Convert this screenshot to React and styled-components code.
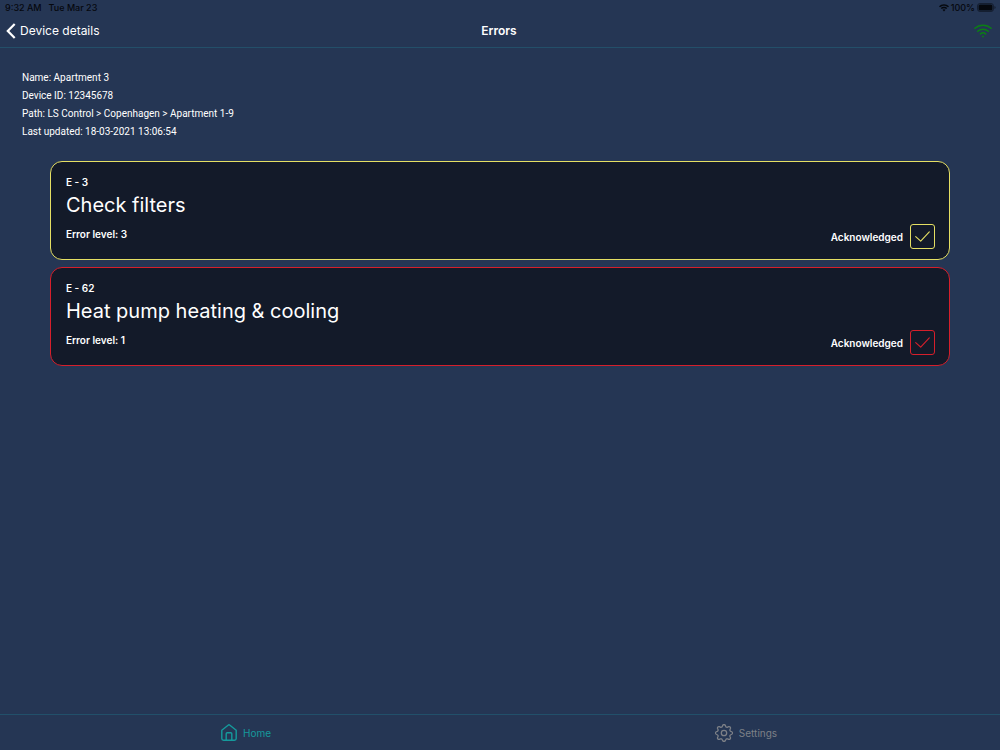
import React, { useState } from 'react';
import styled, { createGlobalStyle } from 'styled-components';

const GlobalStyle = createGlobalStyle`
    * {
        box-sizing : border-box;
    }
    body {
        margin : 0;
        background : #253654;
        color : #fff;
        font-family : Inter, "Liberation Sans", sans-serif;
    }
    a {
        color : inherit;
        text-decoration : none;
    }
    svg {
        display : block;
        flex : none;
    }
`

const Screen = styled.div`
    min-height : 100vh;
    display : flex;
    flex-direction : column;
`

const StatusBar = styled.div`
    height : 15px;
    padding : 0 4px 0 5px;
    display : flex;
    justify-content : space-between;
    align-items : center;
    color : #05080e;
    font-size : 9px;
    line-height : 15px;
    font-weight : 500;
`

const StatusGroup = styled.div`
    display : flex;
    align-items : center;
    gap : ${props => props.$gap}px;
`

const HeaderBlock = styled.header`
    height : 33px;
    padding : 0 8px 0 6px;
    display : grid;
    grid-template-columns : 1fr auto 1fr;
    align-items : center;
    border-bottom : 1px solid #234f69;

    h1 {
        margin : 0;
        font-size : 12px;
        line-height : 16px;
        font-weight : 600;
    }
`

const BackLink = styled.a`
    display : flex;
    align-items : center;
    gap : 4px;
    font-size : 12px;
    line-height : 16px;
`

const Signal = styled.div`
    justify-self : end;
`

const Main = styled.main`
    flex : 1;
    padding : 21px 0;
`

const DeviceInfo = styled.ul`
    margin : 0 0 20px;
    padding : 0 22px;
    list-style : none;
    font-family : Roboto, "Liberation Sans", sans-serif;
    font-size : 10px;

    li {
        height : 18px;
        line-height : 18px;
    }
`

const ErrorList = styled.div`
    margin : 0 5%;
    display : flex;
    flex-direction : column;
    gap : 7px;
`

const Card = styled.article`
    min-height : 99px;
    padding : 13px 14px 10px 15px;
    display : flex;
    justify-content : space-between;
    border : 1px solid ${props => props.$color};
    border-radius : 12px;
    background : #131a29;

    h2 {
        margin : 0 0 6px;
        font-size : 20px;
        line-height : 32px;
        font-weight : 400;
    }
`

const Small = styled.div`
    font-size : 10px;
    line-height : 14px;
    font-weight : 600;
`

const Acknowledge = styled.label`
    align-self : flex-end;
    display : flex;
    align-items : center;
    gap : 7px;
    font-size : 10px;
    line-height : 14px;
    font-weight : 600;
`

const Box = styled.span`
    display : grid;
    color : ${props => props.$color};

    > * {
        grid-area : 1 / 1;
    }
    input {
        appearance : none;
        width : 25px;
        height : 25px;
        margin : 0;
        border : 1px solid ${props => props.$color};
        border-radius : 3px;
    }
    svg {
        place-self : center;
        pointer-events : none;
    }
    input:not(:checked) + svg {
        visibility : hidden;
    }
`

const TabBar = styled.nav`
    height : 36px;
    display : flex;
    border-top : 1px solid #22506a;
`

const Tab = styled.a`
    flex : 1;
    display : flex;
    justify-content : center;
    align-items : center;
    gap : 6px;
    padding-right : 8px;
    color : ${props => props.$active ? '#159a9c' : '#7d8087'};
    font-size : 10px;
    line-height : 16px;
`

const errors = [
    { code : 3, title : 'Check filters', level : 3, color : '#e5df63' },
    { code : 62, title : 'Heat pump heating & cooling', level : 1, color : '#d61f2b' },
];

function StatusWifi(){
    return (
        <svg width="10" height="8" viewBox="0 0 20 15" fill="currentColor">
            <path d="M10 0C6.200 0 2.700 1.500 0 4l2 2.100C4.100 4.100 6.900 3 10 3s5.900 1.100 8 3.100L20 4C17.300 1.500 13.800 0 10 0z"/>
            <path d="M10 5C7.500 5 5.200 6 3.500 7.600l2 2.100C6.700 8.600 8.300 8 10 8s3.300.6 4.500 1.700l2-2.100C14.800 6 12.500 5 10 5z"/>
            <path d="M10 10c-1.200 0-2.200.4-3 1.200l3 3.400 3-3.400c-.8-.8-1.800-1.200-3-1.200z"/>
        </svg>
    );
}

function Battery(){
    return (
        <svg width="19" height="9" viewBox="0 0 19 9">
            <rect x=".5" y=".5" width="16" height="8" rx="2.500" fill="none" stroke="currentColor" strokeOpacity=".5"/>
            <rect x="1.500" y="1.500" width="14" height="6" rx="1.500" fill="currentColor"/>
            <path d="M17.500 3v3c.7-.3 1-.8 1-1.500s-.3-1.200-1-1.500z" fill="currentColor" opacity=".6"/>
        </svg>
    );
}

function SignalIcon(){
    return (
        <svg width="18" height="14" viewBox="0 0 18 14" fill="none" stroke="#0b8014" strokeWidth="1.500" strokeLinecap="round">
            <path d="M.9 4.300C5.400.1 12.600.1 17.100 4.300"/>
            <path d="M3.700 7.200c3-2.700 7.600-2.700 10.600 0"/>
            <path d="M6.400 9.900c1.500-1.300 3.700-1.300 5.200 0"/>
            <circle cx="9" cy="12.500" r=".9" fill="#0b8014" stroke="none"/>
        </svg>
    );
}

function BackIcon(){
    return (
        <svg width="10" height="16" viewBox="0 0 10 16" fill="none" stroke="#fff" strokeWidth="2.200">
            <path d="M8.700 1 1.800 8l6.900 7"/>
        </svg>
    );
}

function CheckIcon(){
    return (
        <svg width="15" height="11" viewBox="0 0 15 11" fill="none" stroke="currentColor" strokeWidth="1.100" strokeLinecap="round" strokeLinejoin="round">
            <path d="M.7 5.600 5.700 10.200 14.300.8"/>
        </svg>
    );
}

function HomeIcon(){
    return (
        <svg width="16" height="17" viewBox="0 0 16 17" fill="none" stroke="currentColor" strokeWidth="1.400" strokeLinejoin="round">
            <path d="M.8 6.300 7.100 1.200a1.400 1.400 0 0 1 1.800 0l6.300 5.100v8.200a1.700 1.700 0 0 1-1.700 1.700h-11A1.700 1.700 0 0 1 .8 14.500z"/>
            <path d="M5.200 16V9.800c0-.6.400-1 1-1h3.600c.6 0 1 .4 1 1V16"/>
        </svg>
    );
}

function GearIcon(){
    return (
        <svg width="18" height="18" viewBox="0 0 24 24" fill="none" stroke="currentColor" strokeWidth="1.700" strokeLinejoin="round">
            <path d="M10.300 1.800a1.900 1.900 0 0 1 3.400 0l.6 1.400a1.900 1.900 0 0 0 2.500 1l1.400-.6a1.900 1.900 0 0 1 2.400 2.400l-.6 1.300a1.900 1.900 0 0 0 1 2.500l1.300.5a1.900 1.900 0 0 1 0 3.400l-1.300.6a1.900 1.900 0 0 0-1 2.500l.6 1.300a1.900 1.900 0 0 1-2.400 2.400l-1.400-.6a1.900 1.900 0 0 0-2.500 1l-.6 1.300a1.900 1.900 0 0 1-3.400 0l-.6-1.300a1.900 1.900 0 0 0-2.500-1l-1.400.6a1.900 1.900 0 0 1-2.400-2.400l.6-1.300a1.900 1.900 0 0 0-1-2.500l-1.300-.6a1.900 1.900 0 0 1 0-3.400L3 9.800a1.900 1.900 0 0 0 1-2.500L3.400 6a1.900 1.900 0 0 1 2.400-2.400l1.400.6a1.900 1.900 0 0 0 2.500-1z"/>
            <circle cx="12" cy="12" r="3.600"/>
        </svg>
    );
}

function ErrorCard({ error }){
    const [ checked, setChecked ] = useState(true);

    return (
        <Card $color={error.color}>
            <div>
                <Small>E - {error.code}</Small>
                <h2>{error.title}</h2>
                <Small>Error level: {error.level}</Small>
            </div>
            <Acknowledge>
                Acknowledged
                <Box $color={error.color}>
                    <input type="checkbox" checked={checked} onChange={() => setChecked(!checked)}/>
                    <CheckIcon/>
                </Box>
            </Acknowledge>
        </Card>
    );
}

export default function App(){
    return (
        <Screen>
            <GlobalStyle/>
            <StatusBar>
                <StatusGroup $gap={7}>
                    <span>9:32 AM</span>
                    <span>Tue Mar 23</span>
                </StatusGroup>
                <StatusGroup $gap={2}>
                    <StatusWifi/>
                    <span>100%</span>
                    <Battery/>
                </StatusGroup>
            </StatusBar>
            <HeaderBlock>
                <BackLink href="#device"><BackIcon/>Device details</BackLink>
                <h1>Errors</h1>
                <Signal><SignalIcon/></Signal>
            </HeaderBlock>
            <Main>
                <DeviceInfo>
                    <li>Name: Apartment 3</li>
                    <li>Device ID: 12345678</li>
                    <li>Path: LS Control &gt; Copenhagen &gt; Apartment 1-9</li>
                    <li>Last updated: 18-03-2021 13:06:54</li>
                </DeviceInfo>
                <ErrorList>
                    {errors.map(error => <ErrorCard key={error.code} error={error}/>)}
                </ErrorList>
            </Main>
            <TabBar>
                <Tab href="#home" $active><HomeIcon/>Home</Tab>
                <Tab href="#settings"><GearIcon/>Settings</Tab>
            </TabBar>
        </Screen>
    );
};
